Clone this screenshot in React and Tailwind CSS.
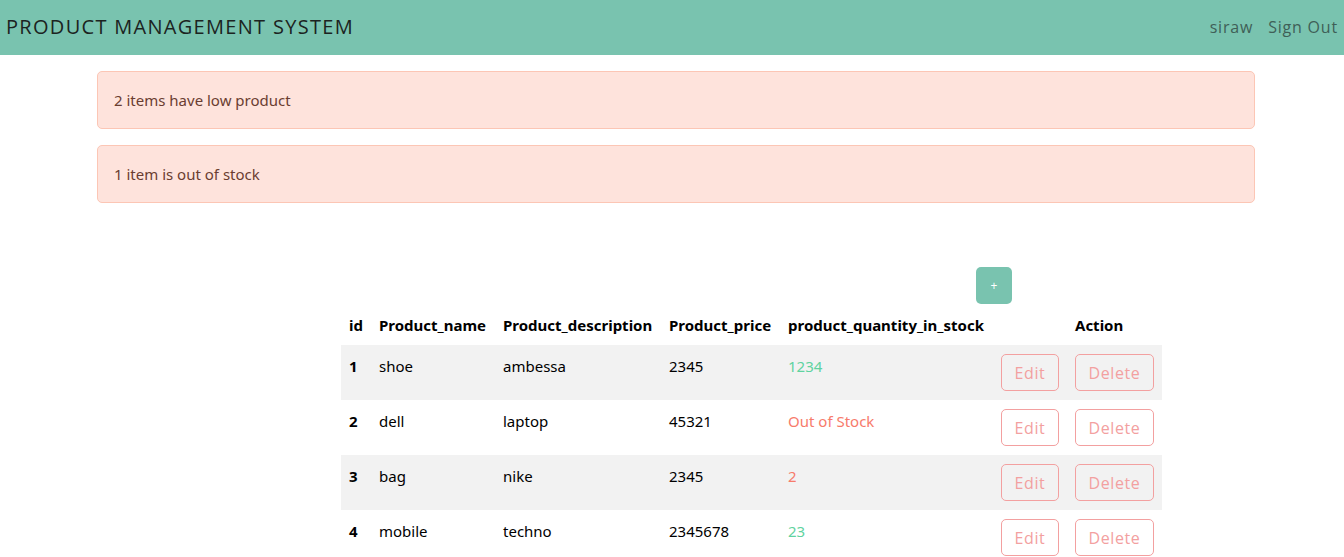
import React from "react";

const rows = [
  { id: 1, name: "shoe", desc: "ambessa", price: "2345", qty: "1234", tone: "green" },
  { id: 2, name: "dell", desc: "laptop", price: "45321", qty: "Out of Stock", tone: "red" },
  { id: 3, name: "bag", desc: "nike", price: "2345", qty: "2", tone: "red" },
  { id: 4, name: "mobile", desc: "techno", price: "2345678", qty: "23", tone: "green" },
];

const mont = { fontFamily: '"Open Sans", "Noto Sans", sans-serif' };

export default function App() {
  return (
    <div className="w-[1344px] h-[557px] overflow-hidden bg-white" style={{ fontFamily: '"Noto Sans", "Open Sans", sans-serif' }}>
      <header className="h-[55px] bg-[#79c3af] flex items-center justify-between pl-[6px] pr-[6px]">
        <div className="text-[20px] leading-[26px] text-[#1c2321] tracking-[1.3px] -mt-[2px]" style={mont}>PRODUCT MANAGEMENT SYSTEM</div>
        <nav className="flex items-center gap-[15px] text-[16px] leading-[22px] text-[#3f5f57] tracking-[0.8px] -mt-[2px]" style={mont}>
          <span>siraw</span>
          <span>Sign Out</span>
        </nav>
      </header>

      <div className="ml-[97px] w-[1158px] pt-[16px]">
        <div className="h-[58px] mb-[16px] flex items-center px-[16px] rounded-[5px] border border-[#fcc6b5] bg-[#fee3dc] text-[15px] text-[#6a3d31]">
          2 items have low product
        </div>
        <div className="h-[58px] flex items-center px-[16px] rounded-[5px] border border-[#fcc6b5] bg-[#fee3dc] text-[15px] text-[#6a3d31]">
          1 item is out of stock
        </div>
      </div>

      <div className="ml-[976px] mt-[64px] w-[36px] h-[37px] rounded-[5px] bg-[#79c3af] text-white text-[12px] flex items-center justify-center" style={mont}>
        +
      </div>

      <table className="ml-[341px] mt-[9px] table-fixed border-collapse w-[821px] text-[15px] text-black">
        <colgroup>
          <col className="w-[30px]" />
          <col className="w-[124px]" />
          <col className="w-[166px]" />
          <col className="w-[119px]" />
          <col className="w-[213px]" />
          <col className="w-[74px]" />
          <col className="w-[95px]" />
        </colgroup>
        <thead>
          <tr className="h-[32px] font-bold">
            <th className="text-left align-top pl-[8px] pb-[8px] leading-6 whitespace-nowrap">id</th>
            <th className="text-left align-top pl-[8px] pb-[8px] leading-6 whitespace-nowrap">Product_name</th>
            <th className="text-left align-top pl-[8px] pb-[8px] leading-6 whitespace-nowrap">Product_description</th>
            <th className="text-left align-top pl-[8px] pb-[8px] leading-6 whitespace-nowrap">Product_price</th>
            <th className="text-left align-top pl-[8px] pb-[8px] leading-6 whitespace-nowrap">product_quantity_in_stock</th>
            <th className="text-left align-top pl-[8px] pb-[8px] leading-6"></th>
            <th className="text-left align-top pl-[8px] pb-[8px] leading-6 whitespace-nowrap">Action</th>
          </tr>
        </thead>
        <tbody>
          {rows.map((r, i) => (
            <tr key={r.id} className={i % 2 === 0 ? "h-[55px] bg-[#f2f2f2]" : "h-[55px] bg-white"}>
              <td className="align-top pl-[8px] pt-[9px] leading-6 font-bold">{r.id}</td>
              <td className="align-top pl-[8px] pt-[9px] leading-6">{r.name}</td>
              <td className="align-top pl-[8px] pt-[9px] leading-6">{r.desc}</td>
              <td className="align-top pl-[8px] pt-[9px] leading-6">{r.price}</td>
              <td className={"align-top pl-[8px] pt-[9px] leading-6 " + (r.tone === "green" ? "text-[#5fd3a0]" : "text-[#f77b6b]")}>{r.qty}</td>
              <td className="align-top pl-[8px] pt-[9px]">
                <button className="w-[58px] h-[37px] rounded-[5px] border border-[#f3a0a0] text-[#f3a0a0] text-[16px] tracking-[0.6px] flex items-center justify-center" style={mont}>Edit</button>
              </td>
              <td className="align-top pl-[8px] pt-[9px]">
                <button className="w-[79px] h-[37px] rounded-[5px] border border-[#f3a0a0] text-[#f3a0a0] text-[16px] tracking-[0.6px] flex items-center justify-center" style={mont}>Delete</button>
              </td>
            </tr>
          ))}
        </tbody>
      </table>
    </div>
  );
}
